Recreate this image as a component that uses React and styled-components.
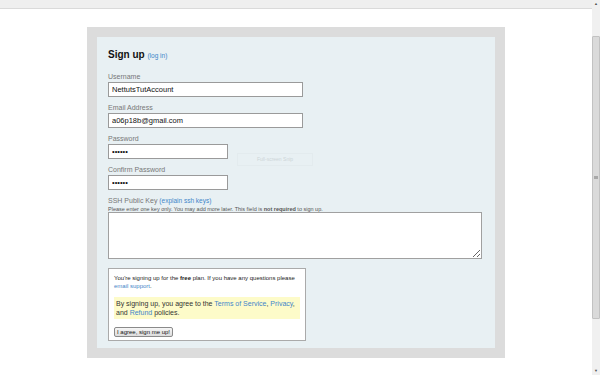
import React from "react";
import styled, { createGlobalStyle } from "styled-components";

const Global = createGlobalStyle`
  html, body {
    margin: 0;
    padding: 0;
    background: #fff;
    overflow: hidden;
  }
  body {
    font-family: "Liberation Sans", Arial, sans-serif;
  }
`;

export default function App() {
  return (
    <Page>
      <Global />
      <Main>
        <TopBar />
        <Wrapper>
          <Frame>
            <Panel>
              <Heading>
                Sign up <Link small>(log in)</Link>
              </Heading>

              <Field>
                <Label>Username</Label>
                <Input type="text" defaultValue="NettutsTutAccount" />
              </Field>
              <Field>
                <Label>Email Address</Label>
                <Input type="text" defaultValue="a06p18b@gmail.com" />
              </Field>
              <Field>
                <Label>Password</Label>
                <Input type="password" defaultValue="secret" narrow />
              </Field>
              <Field>
                <Label>Confirm Password</Label>
                <Input type="password" defaultValue="secret" narrow />
              </Field>
              <Field>
                <Label>
                  SSH Public Key <Link small>(explain ssh keys)</Link>
                </Label>
                <Help>
                  Please enter one key only. You may add more later. This field is{" "}
                  <b>not required</b> to sign up.
                </Help>
                <TextArea />
              </Field>

              <InfoBox>
                <InfoText>
                  You're signing up for the <b>free</b> plan. If you have any questions please
                  <br />
                  <Link>email support</Link>.
                </InfoText>
                <Terms>
                  By signing up, you agree to the <Link>Terms of Service</Link>,{" "}
                  <Link>Privacy</Link>,
                  <br />
                  and <Link>Refund</Link> policies.
                </Terms>
                <Button>I agree, sign me up!</Button>
              </InfoBox>

              <Snip>Full-screen Snip</Snip>
            </Panel>
          </Frame>
        </Wrapper>
      </Main>
      <ScrollBar>
        <Arrow>▲</Arrow>
        <Track>
          <Thumb>
            <Grip />
          </Thumb>
        </Track>
        <Arrow>▼</Arrow>
      </ScrollBar>
    </Page>
  );
}

const Page = styled.div`
  display: flex;
  width: 600px;
  height: 375px;
  overflow: hidden;
`;

const Main = styled.div`
  flex: 1;
  display: flex;
  flex-direction: column;
  min-width: 0;
`;

const TopBar = styled.div`
  height: 8px;
  background: #efefef;
  border-bottom: 1px solid #dadada;
  flex-shrink: 0;
`;

const Wrapper = styled.div`
  display: flex;
  justify-content: center;
  padding-top: 18px;
`;

const Frame = styled.div`
  width: 418px;
  padding: 10px;
  box-sizing: border-box;
  background: #dcdcdc;
`;

const Panel = styled.div`
  position: relative;
  background: #e8f0f3;
  padding: 12px 11px 7px;
`;

const Heading = styled.h2`
  margin: 0 0 10px;
  font-size: 10px;
  line-height: 12px;
  font-weight: bold;
  color: #111;
`;

const Link = styled.a`
  color: #3f86c9;
  font-weight: normal;
  font-size: ${(p) => (p.small ? "6.5px" : "inherit")};
  cursor: pointer;
`;

const Field = styled.div`
  margin-bottom: 6px;
`;

const Label = styled.div`
  font-size: 7px;
  line-height: 10px;
  color: #777;
`;

const Input = styled.input`
  display: block;
  box-sizing: border-box;
  width: ${(p) => (p.narrow ? "120px" : "195px")};
  height: 15px;
  margin: 0;
  padding: 0 3px;
  border: 1px solid #9a9a9a;
  background: #fff;
  font-family: "Liberation Sans", Arial, sans-serif;
  font-size: 7.5px;
  color: #111;
  outline: none;
`;

const Help = styled.div`
  font-size: 5.5px;
  line-height: 6px;
  color: #555;
`;

const TextArea = styled.textarea`
  display: block;
  box-sizing: border-box;
  width: 374px;
  height: 47px;
  margin: 0;
  border: 1px solid #a0a0a0;
  background: #fff;
  resize: vertical;
  outline: none;
`;

const InfoBox = styled.div`
  width: 198px;
  box-sizing: border-box;
  margin-top: 9px;
  padding: 5px 5px 3px;
  border: 1px solid #aaa;
  background: #fff;
`;

const InfoText = styled.p`
  margin: 0;
  font-size: 6px;
  line-height: 8px;
  color: #222;
`;

const Terms = styled.p`
  margin: 7px 0 8px;
  padding: 2px;
  background: #fdfbc9;
  font-size: 7px;
  line-height: 9px;
  color: #333;
`;

const Button = styled.button`
  display: block;
  height: 10px;
  padding: 0 2px;
  border: 1px solid #8a8a8a;
  border-radius: 2px;
  background: linear-gradient(#f6f6f6, #dcdcdc);
  font-family: "Liberation Sans", Arial, sans-serif;
  font-size: 6px;
  line-height: 8px;
  color: #111;
`;

const Snip = styled.div`
  position: absolute;
  left: 140px;
  top: 116px;
  width: 74px;
  height: 11px;
  border: 1px solid #e3ebee;
  font-size: 5px;
  line-height: 11px;
  text-align: center;
  color: #cdd5d8;
`;

const ScrollBar = styled.div`
  width: 8px;
  flex-shrink: 0;
  display: flex;
  flex-direction: column;
  background: #f0f0f0;
`;

const Arrow = styled.div`
  height: 8px;
  font-size: 4px;
  line-height: 8px;
  text-align: center;
  color: #555;
`;

const Track = styled.div`
  flex: 1;
  padding: 28px 0 48px;
  display: flex;
`;

const Thumb = styled.div`
  flex: 1;
  display: flex;
  align-items: center;
  justify-content: center;
  background: #dadada;
  border: 1px solid #c2c2c2;
  border-radius: 1px;
`;

const Grip = styled.div`
  width: 4px;
  height: 3px;
  background: #a8a8a8;
`;
